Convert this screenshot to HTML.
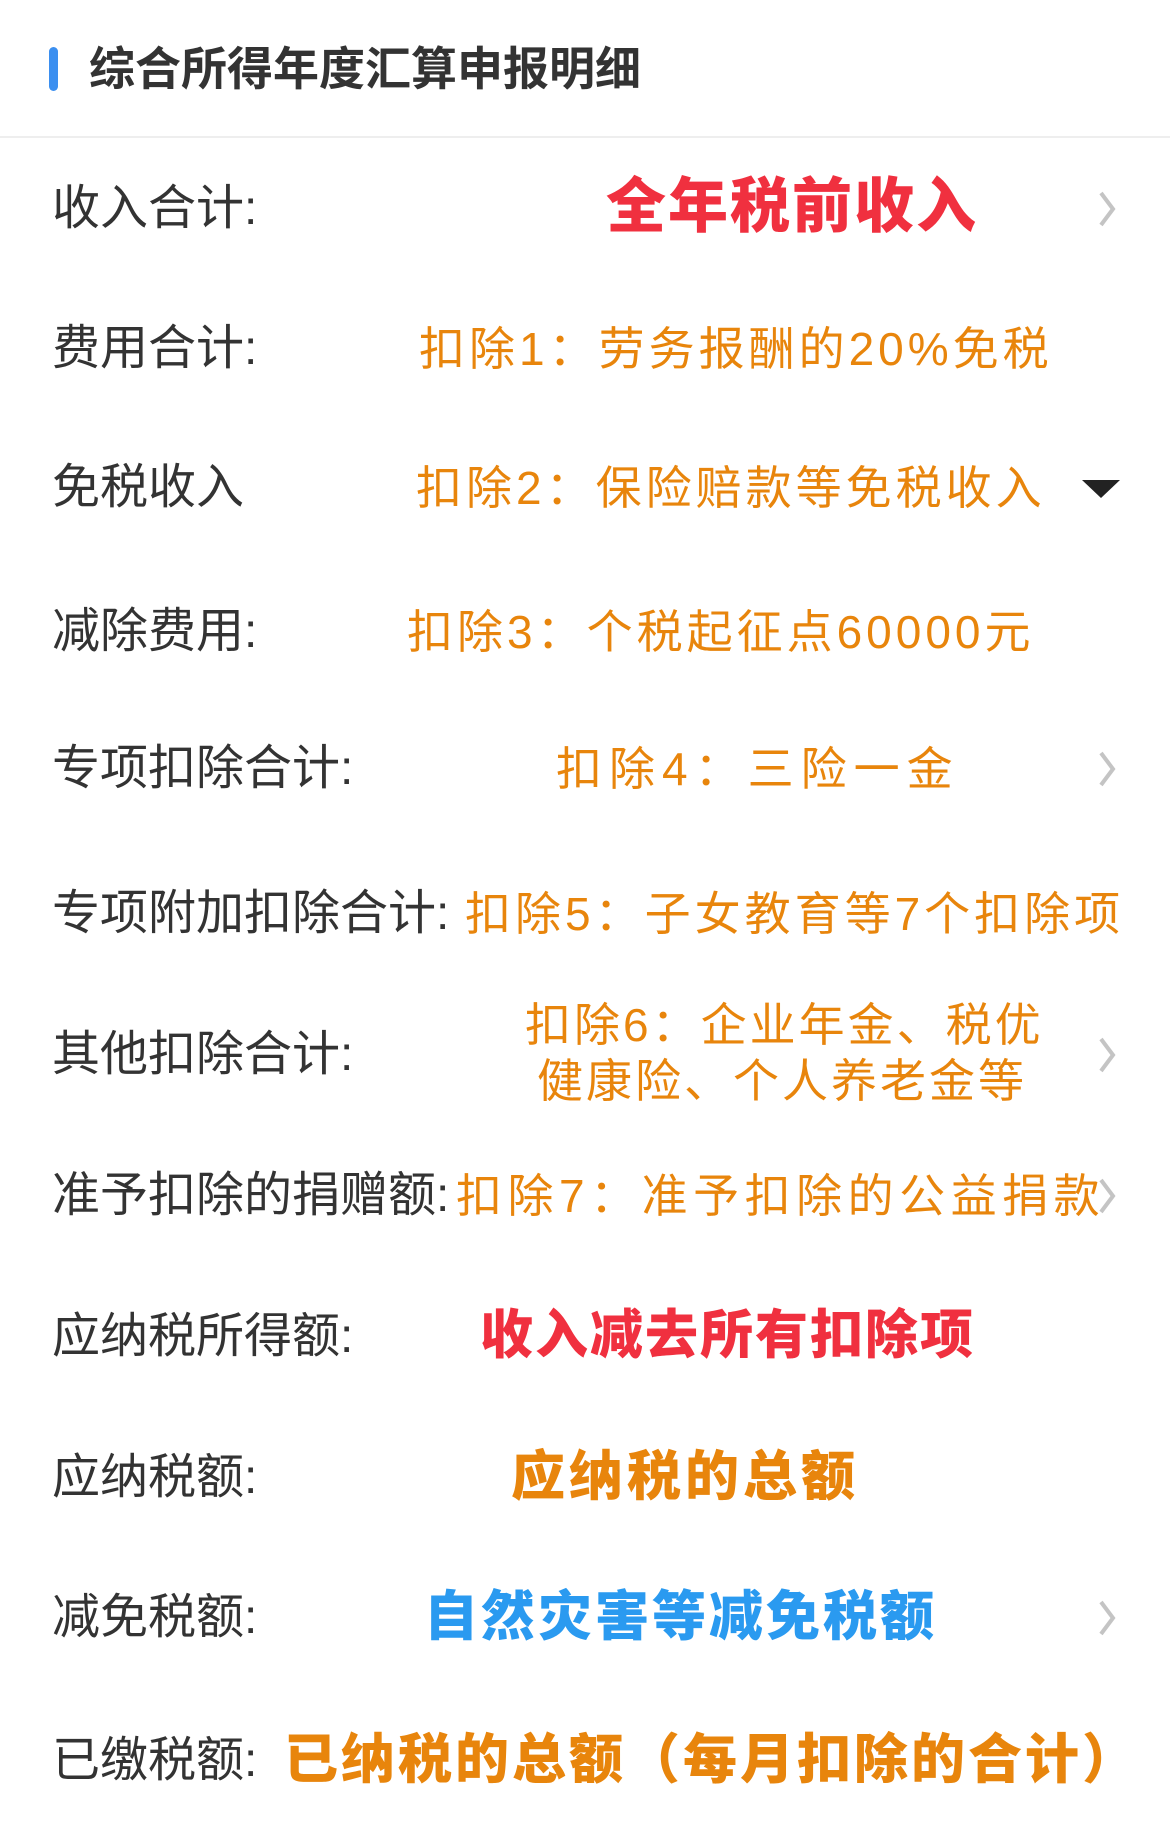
<!DOCTYPE html>
<html><head><meta charset="utf-8"><style>
html,body{margin:0;padding:0;background:#fff;}
body{width:1170px;height:1824px;position:relative;overflow:hidden;font-family:"Liberation Sans","Noto Sans CJK SC",sans-serif;}
.t{position:absolute;white-space:nowrap;height:64px;line-height:64px;}
.lab{left:52px;font-size:48px;color:#333;}
.o{color:#e8850c;font-size:46px;letter-spacing:4px;}
.b{font-weight:900;letter-spacing:2px;}
.chev{position:absolute;left:1096px;width:22px;height:40px;}
</style></head><body>
<div style="position:absolute;left:49px;top:47px;width:9px;height:44px;border-radius:5px;background:#3b8ff0"></div>
<div class="t" style="left:89px;top:37px;font-size:46px;font-weight:bold;color:#333;">综合所得年度汇算申报明细</div>
<div style="position:absolute;left:0;top:136px;width:1170px;height:2px;background:#eee"></div>

<div class="t lab" style="top:177px">收入合计:</div>
<div class="t b" style="left:606px;top:175px;font-size:60px;color:#f0303f;">全年税前收入</div>

<div class="t lab" style="top:317px">费用合计:</div>
<div class="t o" style="left:419px;top:317px">扣除1：劳务报酬的20%免税</div>

<div class="t lab" style="top:456px">免税收入</div>
<div class="t o" style="left:416px;top:456px">扣除2：保险赔款等免税收入</div>
<svg style="position:absolute;left:1082px;top:478px" width="38" height="22"><path d="M0 2 L38 2 L19 20Z" fill="#222"/></svg>

<div class="t lab" style="top:600px">减除费用:</div>
<div class="t o" style="left:407px;top:600px">扣除3：个税起征点60000元</div>

<div class="t lab" style="top:737px">专项扣除合计:</div>
<div class="t o" style="left:556px;top:737px;letter-spacing:7px">扣除4：三险一金</div>

<div class="t lab" style="top:882px">专项附加扣除合计:</div>
<div class="t o" style="left:465px;top:882px">扣除5：子女教育等7个扣除项</div>

<div class="t lab" style="top:1023px">其他扣除合计:</div>
<div class="t o" style="left:525px;top:997px;height:56px;line-height:56px;letter-spacing:3px">扣除6：企业年金、税优</div>
<div class="t o" style="left:537px;top:1053px;height:56px;line-height:56px;letter-spacing:3px">健康险、个人养老金等</div>

<div class="t lab" style="top:1164px">准予扣除的捐赠额:</div>
<div class="t o" style="left:456px;top:1164px;letter-spacing:5.5px">扣除7：准予扣除的公益捐款</div>

<div class="t lab" style="top:1305px">应纳税所得额:</div>
<div class="t b" style="left:480px;top:1304px;font-size:53px;color:#f0303f;">收入减去所有扣除项</div>

<div class="t lab" style="top:1446px">应纳税额:</div>
<div class="t b" style="left:511px;top:1445px;font-size:54px;color:#e8850c;letter-spacing:4px">应纳税的总额</div>

<div class="t lab" style="top:1586px">减免税额:</div>
<div class="t b" style="left:424px;top:1585px;font-size:54px;color:#2a9af0;letter-spacing:3px">自然灾害等减免税额</div>

<div class="t lab" style="top:1729px">已缴税额:</div>
<div class="t b" style="left:284px;top:1728px;font-size:54px;color:#e8850c;letter-spacing:3px">已纳税的总额（每月扣除的合计）</div>

<svg class="chev" style="top:189px" viewBox="0 0 22 40"><path d="M5 4 L17 20 L5 36" fill="none" stroke="#c4c4c4" stroke-width="4"/></svg>
<svg class="chev" style="top:749px" viewBox="0 0 22 40"><path d="M5 4 L17 20 L5 36" fill="none" stroke="#c4c4c4" stroke-width="4"/></svg>
<svg class="chev" style="top:1035px" viewBox="0 0 22 40"><path d="M5 4 L17 20 L5 36" fill="none" stroke="#c4c4c4" stroke-width="4"/></svg>
<svg class="chev" style="top:1176px" viewBox="0 0 22 40"><path d="M5 4 L17 20 L5 36" fill="none" stroke="#c4c4c4" stroke-width="4"/></svg>
<svg class="chev" style="top:1598px" viewBox="0 0 22 40"><path d="M5 4 L17 20 L5 36" fill="none" stroke="#c4c4c4" stroke-width="4"/></svg>
</body></html>
